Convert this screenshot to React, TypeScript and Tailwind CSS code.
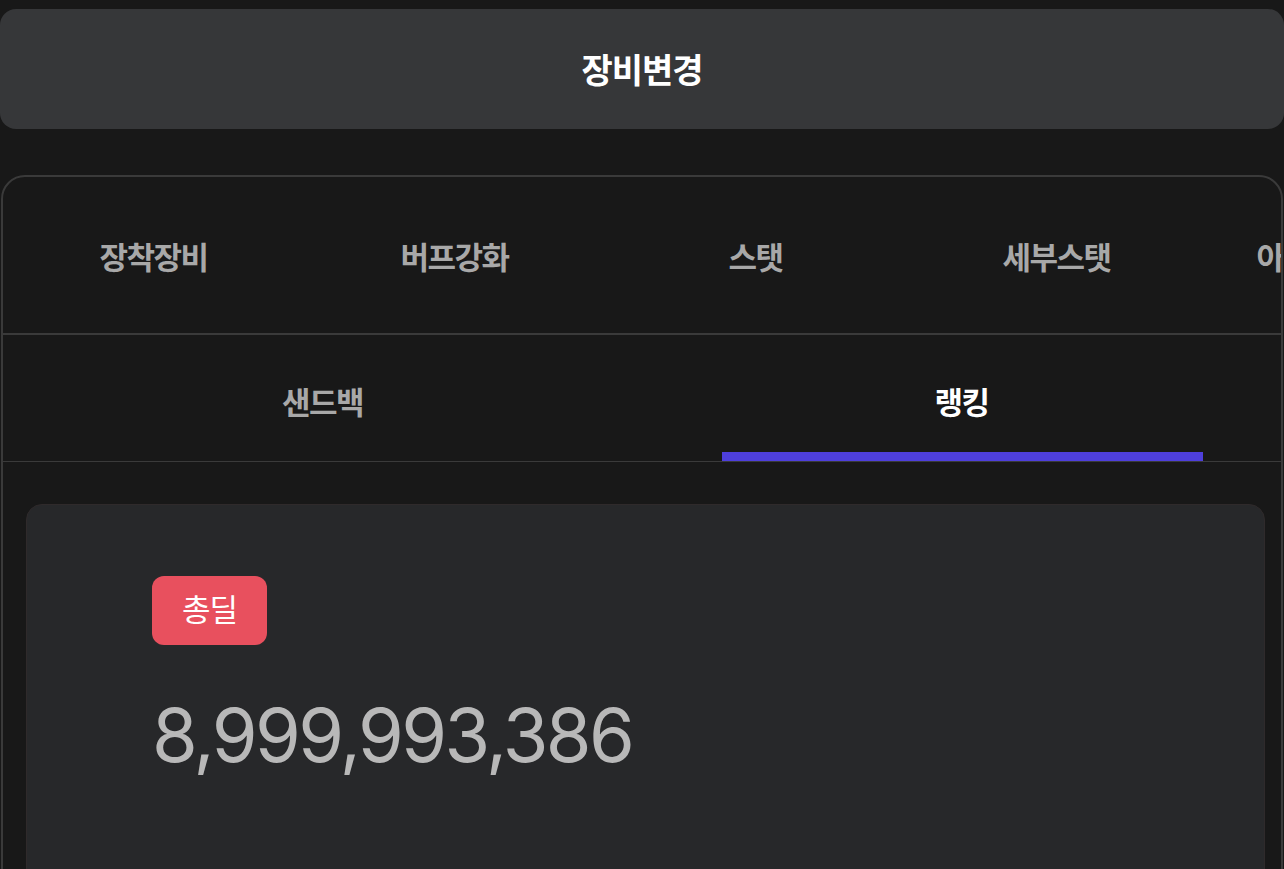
import React from "react";

const font = { fontFamily: "Inter, 'Noto Sans CJK KR', sans-serif" };

export default function App() {
  const topTabs = ["장착장비", "버프강화", "스탯", "세부스탯", "아이템 세트 효과"];
  return (
    <div className="w-[1284px] h-[869px] overflow-hidden bg-[#181818] pt-[9px]" style={font}>
      <div className="h-[120px] rounded-[16px] bg-[#363739] flex items-center justify-center">
        <span className="text-[34px] font-bold text-white tracking-[-1px] pt-[3px]">장비변경</span>
      </div>
      <div className="mt-[46px] mx-[1px] border-2 border-[#3a3a3a] rounded-[24px] h-[760px] overflow-hidden bg-[#181818]">
        <div className="flex h-[158px] border-b-2 border-[#3a3a3a] whitespace-nowrap">
          {topTabs.map((t) => (
            <div key={t} className="w-[301px] shrink-0 flex items-center justify-center pt-[6px]">
              <span className="text-[31px] font-semibold text-[#a8a8a8] tracking-[-1.5px]">{t}</span>
            </div>
          ))}
        </div>
        <div className="flex h-[127px] border-b border-[#3a3a3a]">
          <div className="flex-1 flex items-center justify-center pt-[10px]">
            <span className="text-[31px] font-semibold text-[#a8a8a8] tracking-[-1.5px]">샌드백</span>
          </div>
          <div className="flex-1 relative flex items-center justify-center pt-[10px]">
            <span className="text-[31px] font-semibold text-white tracking-[-1.5px]">랭킹</span>
            <div className="absolute bottom-0 left-[80px] right-[78px] h-[9px] bg-[#4e3fdc]" />
          </div>
        </div>
        <div className="pl-[23px] pt-[42px]">
          <div className="h-[400px] w-[1239px] rounded-[16px] bg-[#27282a] border border-[#2f2a2b] pl-[125px] pt-[71px]">
            <div className="inline-flex items-center justify-center h-[69px] w-[115px] rounded-[12px] bg-[#e8505e]">
              <span className="text-[31px] text-white tracking-[-1px]">총딜</span>
            </div>
            <div className="mt-[45px] text-[74px] leading-[90px] text-[#b8b8b8] tracking-[-2.6px]">8,999,993,386</div>
          </div>
        </div>
      </div>
    </div>
  );
}
